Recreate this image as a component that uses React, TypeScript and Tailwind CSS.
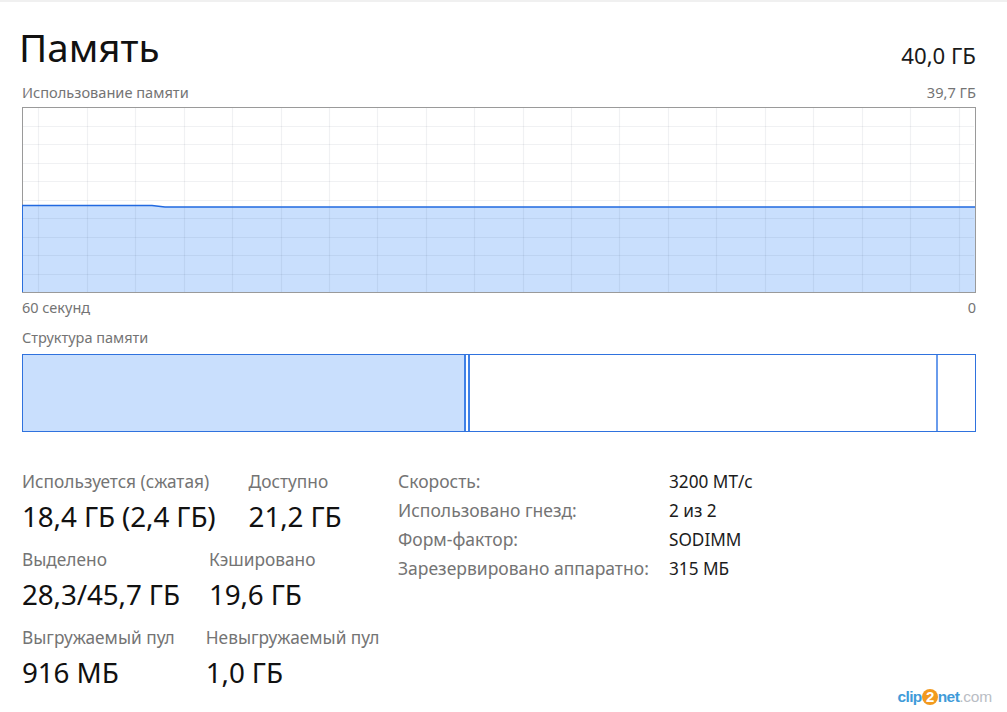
const verticals = [38, 87, 135, 184, 232, 281, 329, 377, 426, 474, 523, 571, 619, 668, 716, 765, 813, 862, 910, 959];
const horizontals = [126, 144, 163, 181, 200, 218, 237, 255, 274];

function UsageGraph() {
  return (
    <svg className="block w-[954px] h-[186px]" viewBox="22 107 954 186">
      <rect x="22" y="107" width="954" height="186" fill="#ffffff" />
      <path d="M22 205.5 L152 205.5 L165 207 L975 207 L975 292 L22 292 Z" fill="#c9dffd" />
      {verticals.map((x) => (
        <line key={x} x1={x + 0.5} x2={x + 0.5} y1="108" y2="292" stroke="#1a2a50" strokeOpacity="0.065" strokeWidth="1.2" />
      ))}
      {horizontals.map((y) => (
        <line key={y} x1="23" x2="974" y1={y + 0.5} y2={y + 0.5} stroke="#1a2a50" strokeOpacity="0.065" strokeWidth="1.2" />
      ))}
      <rect x="22.5" y="107.5" width="953" height="185" fill="none" stroke="#9a9a9a" strokeWidth="1" />
      <line x1="22.5" x2="22.5" y1="205" y2="292" stroke="#2b6fdc" />
      <path d="M22 205.5 L152 205.5 L165 207 L975 207" fill="none" stroke="#2169e0" strokeWidth="1.4" />
    </svg>
  );
}

function Stat({ label, value }: { label: string; value: string }) {
  return (
    <div className="shrink-0">
      <div className="text-[17.3px] leading-[20px] text-[#747474]">{label}</div>
      <div className="text-[27.8px] leading-[36px] text-[#111111] mt-[6px] tracking-[-0.1px]">{value}</div>
    </div>
  );
}

function Row({ label, value }: { label: string; value: string }) {
  return (
    <div className="flex h-[29px] items-center">
      <div className="w-[271px] shrink-0 text-[17.5px] text-[#747474] whitespace-nowrap">{label}</div>
      <div className="text-[17.2px] text-[#1c1c1c] whitespace-nowrap">{value}</div>
    </div>
  );
}

export default function App() {
  return (
    <div className="relative w-[1007px] h-[712px] overflow-hidden bg-white font-['Noto_Sans',sans-serif]">
      <div className="h-[2px] bg-[#f0f0f0]" />
      <div className="pl-[22px] pr-[31px]">
        {/* header */}
        <div className="flex items-end justify-between h-[70px]">
          <div className="text-[38.6px] leading-[50px] text-[#111111] -ml-[3px]">Память</div>
          <div className="text-[22.2px] leading-[30px] text-[#1a1a1a] mb-[1px]">40,0 ГБ</div>
        </div>
        <div className="flex justify-between items-center h-[22px] mt-[10px] text-[14.6px] text-[#747474]">
          <span>Использование памяти</span>
          <span>39,7 ГБ</span>
        </div>
        <div className="mt-[3px]">
          <UsageGraph />
        </div>
        <div className="flex justify-between items-center h-[20px] mt-[5px] text-[14.5px] text-[#747474]">
          <span>60 секунд</span>
          <span>0</span>
        </div>

        <div className="h-[20px] mt-[10px] flex items-center text-[14.5px] text-[#747474]">Структура памяти</div>
        {/* composition bar */}
        <div className="flex w-[954px] h-[78px] mt-[6px] border border-[#2f72de]">
          <div className="w-[443px] bg-[#c9dffd] border-r-2 border-[#3f80e6]" />
          <div className="w-[4px] bg-white border-r-2 border-[#3f80e6]" />
          <div className="w-[468px] border-r-2 border-[#6a9cec]" />
          <div className="flex-1" />
        </div>

        {/* stats */}
        <div className="flex mt-[40px]">
          <div className="w-[376px] flex flex-col gap-[16px]">
            <div className="flex gap-[33px]">
              <Stat label="Используется (сжатая)" value="18,4 ГБ (2,4 ГБ)" />
              <Stat label="Доступно" value="21,2 ГБ" />
            </div>
            <div className="flex gap-[29px]">
              <Stat label="Выделено" value="28,3/45,7 ГБ" />
              <Stat label="Кэшировано" value="19,6 ГБ" />
            </div>
            <div className="flex gap-[31px]">
              <Stat label="Выгружаемый пул" value="916 МБ" />
              <Stat label="Невыгружаемый пул" value="1,0 ГБ" />
            </div>
          </div>
          <div className="-mt-[5px]">
            <Row label="Скорость:" value="3200 МТ/с" />
            <Row label="Использовано гнезд:" value="2 из 2" />
            <Row label="Форм-фактор:" value="SODIMM" />
            <Row label="Зарезервировано аппаратно:" value="315 МБ" />
          </div>
        </div>
      </div>

      {/* watermark */}
      <div className="absolute right-[15px] bottom-[5px] flex items-center font-['Liberation_Sans',sans-serif] text-[15.5px] leading-[20px] tracking-[-0.6px] text-[#3f9bd9]">
        <span className="font-bold">clip</span>
        <span className="flex items-center justify-center w-[16px] h-[16px] rounded-full bg-[#f29a1f] text-white text-[15px] font-bold">2</span>
        <span className="font-bold">net</span>
        <span className="text-[#b9bdc4] tracking-[-0.2px]">.com</span>
      </div>
    </div>
  );
}
